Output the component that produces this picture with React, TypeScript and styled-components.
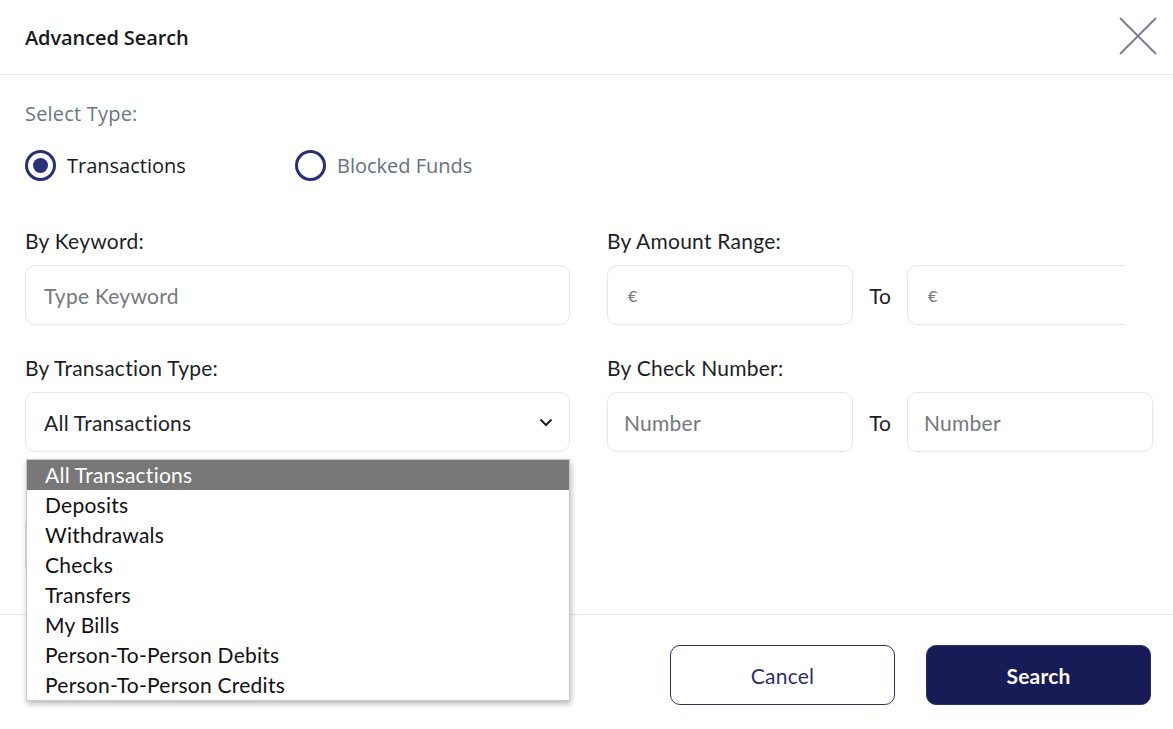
import React, { useState } from 'react'
import styled, { createGlobalStyle } from 'styled-components'

const GlobalStyle = createGlobalStyle`
  body {
    margin: 0;
    background: #ffffff;
    font-family: Lato, "Liberation Sans", sans-serif;
  }
  * {
    box-sizing: border-box;
  }
`

const Modal = styled.div`
  width: 1173px;
  height: 729px;
  background: #ffffff;
  overflow: hidden;
`

const Header = styled.div`
  height: 75px;
  display: flex;
  align-items: center;
  justify-content: space-between;
  padding: 0 16px 0 25px;
  border-bottom: 1px solid #e2e7f0;
`

const Title = styled.h1`
  margin: 0;
  font-family: "Open Sans", sans-serif;
  font-size: 20px;
  font-weight: 600;
  color: #161a22;
  letter-spacing: -0.1px;
`

const CloseButton = styled.button`
  width: 38px;
  height: 38px;
  padding: 0;
  border: none;
  background: transparent;
  display: flex;
  align-items: center;
  justify-content: center;
  margin-top: -2px;
`

const Body = styled.div`
  padding: 27px 21px 38px 25px;
`

const SectionLabel = styled.div`
  font-family: "Open Sans", sans-serif;
  font-size: 20px;
  letter-spacing: 0.2px;
  line-height: 24px;
  color: #6b7680;
`

const RadioRow = styled.div`
  display: flex;
  margin-top: 23px;
  height: 32px;
  align-items: center;
`

const RadioOption = styled.label`
  width: 270px;
  display: flex;
  align-items: center;
  gap: 11px;
`

const RadioCircle = styled.span<{ $checked?: boolean }>`
  width: 31px;
  height: 31px;
  border-radius: 50%;
  border: 3px solid #2a2f73;
  display: flex;
  align-items: center;
  justify-content: center;

  &::after {
    content: '';
    display: ${p => (p.$checked ? 'block' : 'none')};
    width: 15px;
    height: 15px;
    border-radius: 50%;
    background: #2b3275;
  }
`

const RadioText = styled.span<{ $checked?: boolean }>`
  font-family: "Open Sans", sans-serif;
  font-size: 20px;
  color: ${p => (p.$checked ? '#161a22' : '#66717b')};
`

const Grid = styled.div`
  display: grid;
  grid-template-columns: 545px 546px;
  column-gap: 37px;
  row-gap: 31px;
  margin-top: 48px;
`

const Field = styled.div`
  display: flex;
  flex-direction: column;
  gap: 12px;
  position: relative;
`

const FieldLabel = styled.div`
  font-size: 21px;
  letter-spacing: 0.25px;
  line-height: 24px;
  color: #1c1f26;
`

const TextBox = styled.div<{ $muted?: boolean; $small?: boolean; $pad?: number }>`
  width: 100%;
  height: 60px;
  border: 1px solid #e1e6ef;
  border-radius: 10px;
  display: flex;
  align-items: center;
  justify-content: space-between;
  padding: 0 16px 0 ${p => p.$pad ?? 18}px;
  font-size: ${p => (p.$small ? '16px' : '21px')};
  letter-spacing: ${p => (p.$small ? '0' : '0.25px')};
  color: ${p => (p.$muted ? '#73787d' : '#1c1f26')};
  background: #ffffff;
`

const Range = styled.div`
  display: grid;
  grid-template-columns: 246px 1fr 246px;
  align-items: center;
`

const ToText = styled.span`
  font-size: 21px;
  color: #1c1f26;
  text-align: center;
`

const Clip = styled.div<{ $width: number }>`
  width: ${p => p.$width}px;
  overflow: hidden;
`

const Wide = styled.div`
  width: 246px;
`

const HiddenRow = styled.div`
  margin-top: 64px;
  height: 60px;
  width: 545px;
  border: 1px solid #e1e6ef;
  border-radius: 10px;
`

const OptionList = styled.ul`
  position: absolute;
  top: 103px;
  left: 1px;
  width: 544px;
  margin: 0;
  padding: 0;
  list-style: none;
  background: #ffffff;
  border: 1px solid #c9c9c9;
  box-shadow: 1px 3px 6px rgba(0, 0, 0, 0.28);
  z-index: 5;
`

const OptionItem = styled.li<{ $active?: boolean }>`
  height: 30px;
  line-height: 30px;
  padding-left: 18px;
  font-size: 21px;
  letter-spacing: 0.25px;
  color: ${p => (p.$active ? '#ffffff' : '#111111')};
  background: ${p => (p.$active ? '#787878' : 'transparent')};
`

const Footer = styled.div`
  border-top: 1px solid #e2e7f0;
  display: flex;
  justify-content: flex-end;
  gap: 31px;
  padding: 30px 22px 0 0;
`

const Button = styled.button<{ $primary?: boolean }>`
  width: 225px;
  height: 60px;
  border-radius: 10px;
  font-family: Lato, sans-serif;
  font-size: 21px;
  letter-spacing: 0.2px;
  font-weight: ${p => (p.$primary ? 700 : 400)};
  border: 1px solid #2a2f73;
  color: ${p => (p.$primary ? '#ffffff' : '#2a2f73')};
  background: ${p => (p.$primary ? '#171c56' : '#ffffff')};
`

const options = [
  'All Transactions',
  'Deposits',
  'Withdrawals',
  'Checks',
  'Transfers',
  'My Bills',
  'Person-To-Person Debits',
  'Person-To-Person Credits',
]

function Chevron() {
  return (
    <svg width="14" height="9" viewBox="0 0 14 9">
      <path d="M1.5 1.5 L7 7 L12.5 1.5" fill="none" stroke="#1c1f26" strokeWidth="2" />
    </svg>
  )
}

function App() {
  const [type, setType] = useState('transactions')

  return (
    <Modal>
      <GlobalStyle />
      <Header>
        <Title>Advanced Search</Title>
        <CloseButton aria-label="close">
          <svg width="38" height="38" viewBox="0 0 38 38">
            <path d="M1 1 L37 37 M37 1 L1 37" stroke="#7c8092" strokeWidth="2" />
          </svg>
        </CloseButton>
      </Header>

      <Body>
        <SectionLabel>Select Type:</SectionLabel>
        <RadioRow>
          <RadioOption onClick={() => setType('transactions')}>
            <RadioCircle $checked={type === 'transactions'} />
            <RadioText $checked={type === 'transactions'}>Transactions</RadioText>
          </RadioOption>
          <RadioOption onClick={() => setType('blocked')}>
            <RadioCircle $checked={type === 'blocked'} />
            <RadioText $checked={type === 'blocked'}>Blocked Funds</RadioText>
          </RadioOption>
        </RadioRow>

        <Grid>
          <Field>
            <FieldLabel>By Keyword:</FieldLabel>
            <TextBox $muted>Type Keyword</TextBox>
          </Field>
          <Field>
            <FieldLabel>By Amount Range:</FieldLabel>
            <Range>
              <TextBox $muted $small $pad={20}>€</TextBox>
              <ToText>To</ToText>
              <Clip $width={218}>
                <Wide>
                  <TextBox $muted $small $pad={20}>€</TextBox>
                </Wide>
              </Clip>
            </Range>
          </Field>
          <Field>
            <FieldLabel>By Transaction Type:</FieldLabel>
            <TextBox>
              All Transactions
              <Chevron />
            </TextBox>
            <OptionList>
              {options.map((o, i) => (
                <OptionItem key={o} $active={i === 0}>{o}</OptionItem>
              ))}
            </OptionList>
          </Field>
          <Field>
            <FieldLabel>By Check Number:</FieldLabel>
            <Range>
              <TextBox $muted $pad={16}>Number</TextBox>
              <ToText>To</ToText>
              <TextBox $muted $pad={16}>Number</TextBox>
            </Range>
          </Field>
        </Grid>

        <HiddenRow />
      </Body>

      <Footer>
        <Button>Cancel</Button>
        <Button $primary>Search</Button>
      </Footer>
    </Modal>
  )
}

export default App
